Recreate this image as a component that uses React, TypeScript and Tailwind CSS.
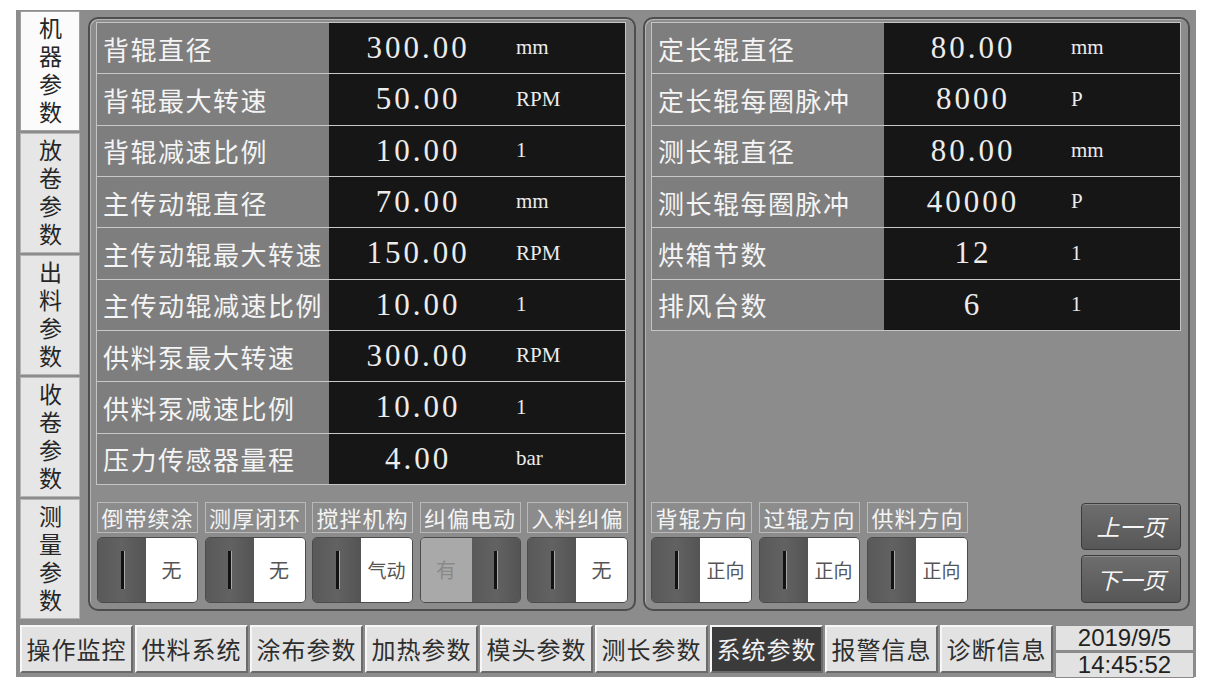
import React from 'react';

const CJK = "font-['Noto_Sans_CJK_SC',sans-serif]";
const SERIF = "font-['Liberation_Serif','Noto_Sans_CJK_SC',serif]";

type Row = [string, string, string];

const leftRows: Row[] = [
  ['背辊直径', '300.00', 'mm'],
  ['背辊最大转速', '50.00', 'RPM'],
  ['背辊减速比例', '10.00', '1'],
  ['主传动辊直径', '70.00', 'mm'],
  ['主传动辊最大转速', '150.00', 'RPM'],
  ['主传动辊减速比例', '10.00', '1'],
  ['供料泵最大转速', '300.00', 'RPM'],
  ['供料泵减速比例', '10.00', '1'],
  ['压力传感器量程', '4.00', 'bar'],
];

const rightRows: Row[] = [
  ['定长辊直径', '80.00', 'mm'],
  ['定长辊每圈脉冲', '8000', 'P'],
  ['测长辊直径', '80.00', 'mm'],
  ['测长辊每圈脉冲', '40000', 'P'],
  ['烘箱节数', '12', '1'],
  ['排风台数', '6', '1'],
];

const leftToggles = [
  { label: '倒带续涂', text: '无', on: false },
  { label: '测厚闭环', text: '无', on: false },
  { label: '搅拌机构', text: '气动', on: false },
  { label: '纠偏电动', text: '有', on: true },
  { label: '入料纠偏', text: '无', on: false },
];

const rightToggles = [
  { label: '背辊方向', text: '正向', on: false },
  { label: '过辊方向', text: '正向', on: false },
  { label: '供料方向', text: '正向', on: false },
];

const sideTabs = ['机器参数', '放卷参数', '出料参数', '收卷参数', '测量参数'];
const navItems = ['操作监控', '供料系统', '涂布参数', '加热参数', '模头参数', '测长参数', '系统参数', '报警信息', '诊断信息'];

const ParamTable: React.FC<{ rows: Row[]; height: string }> = ({ rows, height }) => (
  <div className={`w-[530px] ${height} flex flex-col border border-[#c4c4c4]`}>
    {rows.map(([label, value, unit], i) => (
      <div
        key={label}
        className={`flex-1 flex ${i > 0 ? 'border-t border-[#c8c8c8]' : ''}`}
      >
        <div className={`w-[232px] bg-[#7e7e7e] flex items-center pl-[6px] text-[26px] tracking-[1.5px] text-[#f4f4f4] ${CJK}`}>
          {label}
        </div>
        <div className="flex-1 bg-[#161616] flex items-center">
          <div className={`w-[178px] text-center text-[31px] tracking-[3px] text-[#ececec] ${SERIF}`}>{value}</div>
          <div className={`pl-[9px] text-[21px] text-[#ececec] ${SERIF}`}>{unit}</div>
        </div>
      </div>
    ))}
  </div>
);

const Knob = () => (
  <div className="w-[48px] h-full bg-[linear-gradient(90deg,#595959,#626262,#545454)] flex items-center justify-center">
    <div className="w-[3px] h-[38px] bg-[#121212] shadow-[1px_0_0_#a8a8a8]" />
  </div>
);

const Toggle: React.FC<{ label: string; text: string; on: boolean }> = ({ label, text, on }) => (
  <div className="w-[101px] flex flex-col">
    <div className={`h-[31px] border border-[#b9b9b9] flex items-center justify-center text-[22px] tracking-[1px] text-[#f4f4f4] ${CJK}`}>
      {label}
    </div>
    <div className="mt-[4px] h-[66px] flex rounded-[5px] overflow-hidden border border-[#4b4b4b]">
      {on ? (
        <>
          <div className={`flex-1 bg-[#a9a9a9] flex items-center justify-center text-[20px] text-[#8a8a8a] ${CJK}`}>{text}</div>
          <Knob />
        </>
      ) : (
        <>
          <Knob />
          <div className={`flex-1 bg-white flex items-center justify-center ${text.length > 1 ? 'text-[19px]' : 'text-[20px]'} text-[#555] ${CJK}`}>
            {text}
          </div>
        </>
      )}
    </div>
  </div>
);

const PageButton: React.FC<{ text: string; h: string }> = ({ text, h }) => (
  <div className={`w-[100px] ${h} rounded-[4px] border border-[#3c3c3c] bg-[linear-gradient(#6e6e6e,#575757)] shadow-[inset_0_1px_0_#8c8c8c] flex items-center justify-center italic text-[23px] text-[#f6f6f6] ${CJK}`}>
    {text}
  </div>
);

const Panel: React.FC<{ width: string; children: React.ReactNode }> = ({ width, children }) => (
  <div className={`${width} h-[594px] rounded-[10px] border-2 border-[#4e4e4e] shadow-[inset_1px_1px_0_#b4b4b4] pl-[6px] pt-[3px] pb-[6px] flex flex-col`}>
    {children}
  </div>
);

export default function App() {
  return (
    <div className="w-[1218px] h-[691px] bg-white overflow-hidden">
      <div className="ml-[16px] pt-[10px]">
        <div className="w-[1180px] h-[667px] bg-[#8c8c8c] flex flex-col">
          <div className="flex h-[612px]">
            {/* side tabs */}
            <div className="ml-[4px] w-[60px] pt-[1px] flex flex-col gap-[2px]">
              {sideTabs.map((t, i) => (
                <div
                  key={t}
                  className={`h-[120px] flex items-center justify-center ${
                    i === 0 ? 'bg-[#fbfbfb] border border-[#a0a0a0]' : 'bg-[#e6e6e6] border border-[#b4b4b4]'
                  }`}
                >
                  <span className={`[writing-mode:vertical-rl] text-[23px] tracking-[5px] leading-none text-[#262626] pt-[4px] ${CJK}`}>
                    {t}
                  </span>
                </div>
              ))}
            </div>

            {/* panels */}
            <div className="ml-[8px] mt-[7px] flex gap-[7px]">
              <Panel width="w-[548px]">
                <ParamTable rows={leftRows} height="h-[463px]" />
                <div className="mt-[17px] ml-[1px] flex gap-[6.5px]">
                  {leftToggles.map((t) => (
                    <Toggle key={t.label} {...t} />
                  ))}
                </div>
              </Panel>

              <Panel width="w-[547px]">
                <ParamTable rows={rightRows} height="h-[309px]" />
                <div className="flex-1" />
                <div className="w-[530px] flex items-end justify-between">
                  <div className="flex gap-[7px]">
                    {rightToggles.map((t) => (
                      <Toggle key={t.label} {...t} />
                    ))}
                  </div>
                  <div className="flex flex-col gap-[5px]">
                    <PageButton text="上一页" h="h-[47px]" />
                    <PageButton text="下一页" h="h-[48px]" />
                  </div>
                </div>
              </Panel>
            </div>
          </div>

          {/* bottom nav */}
          <div className="ml-[4px] mt-[3px] h-[48px] flex gap-[2px]">
            {navItems.map((n) => (
              <div
                key={n}
                className={`w-[113px] h-full flex items-center justify-center text-[24px] tracking-[1px] border-2 border-t-[#f6f6f6] border-l-[#f6f6f6] border-r-[#6a6a6a] border-b-[#6a6a6a] ${CJK} ${
                  n === '系统参数' ? 'bg-[#3b3b3b] text-[#f0f0f0]' : 'bg-[#e2e2e2] text-[#2e2e2e]'
                }`}
              >
                {n}
              </div>
            ))}
            <div className="w-[139px] h-full flex flex-col gap-[1px] font-['Liberation_Sans',sans-serif] text-[24px] text-[#222]">
              <div className="flex-1 bg-[#e2e2e2] border border-[#8a8a8a] flex items-center justify-center leading-none">2019/9/5</div>
              <div className="flex-1 bg-[#e2e2e2] border border-[#8a8a8a] flex items-center justify-center leading-none">14:45:52</div>
            </div>
          </div>
        </div>
      </div>
    </div>
  );
}
